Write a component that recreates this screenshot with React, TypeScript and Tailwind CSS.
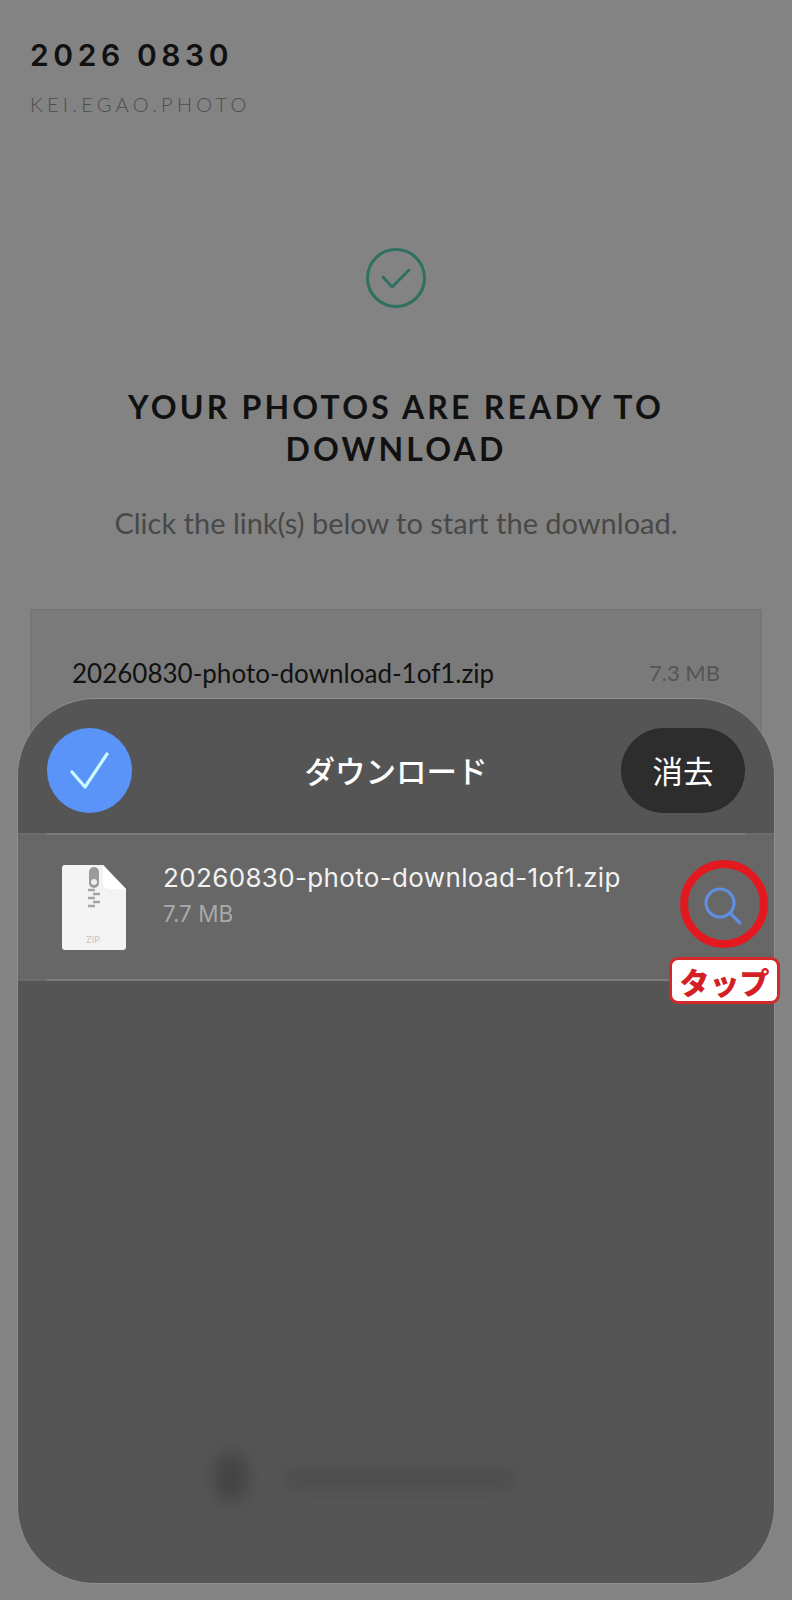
export default function App() {
  const jp = '"Noto Sans CJK JP", sans-serif';
  return (
    <div className="relative w-[792px] h-[1600px] overflow-hidden bg-[#838383] font-['Lato',sans-serif]">
      <div className="flex flex-col px-[30px] pt-[37px]">
        <h1 className="text-[30px] leading-[36px] font-semibold tracking-[4.6px] text-[#111111] font-['Inter',sans-serif]">2026 0830</h1>
        <p className="mt-[19px] text-[20px] leading-[24px] font-light tracking-[4.25px] text-[#4e4e4e]">KEI.EGAO.PHOTO</p>
        <div className="mt-[132px] flex justify-center">
          <svg width="60" height="60" viewBox="0 0 60 60" fill="none" stroke="#2f7160">
            <circle cx="30" cy="30" r="28.5" strokeWidth="3" />
            <path d="M17 29l9 10 17-17" strokeWidth="3" strokeLinecap="round" strokeLinejoin="round" />
          </svg>
        </div>
        <h2 className="mt-[78px] text-center text-[32px] leading-[42px] font-bold tracking-[3.2px] text-[#111111]">
          YOUR PHOTOS ARE READY TO<br />DOWNLOAD
        </h2>
        <p className="mt-[33px] text-center text-[29px] leading-[40px] text-[#484848]">Click the link(s) below to start the download.</p>
        <div className="mt-[66px] h-[200px] border-2 border-[#767676] bg-[#7a7a7a] px-[40px] pt-[45px]">
          <div className="flex items-center justify-between">
            <span className="text-[26px] leading-[34px] text-[#111111]">20260830-photo-download-1of1.zip</span>
            <span className="text-[22px] leading-[34px] text-[#555555]">7.3 MB</span>
          </div>
        </div>
      </div>

      <div className="absolute left-[17px] top-[698px] h-[886px] w-[758px] overflow-hidden rounded-[78px] border border-[#8f8f8f] bg-[#555555]">
        <div className="flex h-[134px] items-center justify-between pt-[8px] pl-[29px] pr-[29px]">
          <div className="w-[124px]">
            <div className="flex h-[85px] w-[85px] items-center justify-center rounded-full bg-[#5b94f8]">
              <svg width="85" height="85" viewBox="0 0 85 85" fill="none" stroke="#c9fbff" strokeWidth="3.2" strokeLinecap="round" strokeLinejoin="round">
                <path d="M25 44l13 15 22-33" />
              </svg>
            </div>
          </div>
          <span className="text-[30.5px] font-medium leading-[40px] text-white" style={{ fontFamily: jp }}>ダウンロード</span>
          <div className="flex h-[85px] w-[124px] items-center justify-center rounded-full bg-[#2d2d2d]">
            <span className="text-[30.5px] leading-[40px] text-white" style={{ fontFamily: jp }}>消去</span>
          </div>
        </div>
        <div className="relative flex h-[148px] items-center border-y-2 border-[#6c6c6c] bg-[#676767] pl-[44px]">
          <div aria-hidden className="absolute left-[29px] right-[29px] top-[-2px] h-[2px] bg-[#7c7c7c]" />
          <div aria-hidden className="absolute left-[29px] right-[29px] bottom-[-2px] h-[2px] bg-[#7c7c7c]" />
          <svg width="64" height="85" viewBox="0 0 64 85">
            <path d="M3 0H41L64 24V82a3 3 0 0 1-3 3H3a3 3 0 0 1-3-3V3a3 3 0 0 1 3-3Z" fill="#f3f3f3" />
            <path d="M41 0L64 24H47a6 6 0 0 1-6-6Z" fill="#ffffff" />
            <rect x="27" y="2" width="10" height="21" rx="5" fill="#9a9a9a" />
            <circle cx="32" cy="17" r="3" fill="#eeeeee" />
            <path d="M26 25h7M31 29h7M26 33h7M31 37h7M26 41h7" stroke="#a5a5a5" strokeWidth="2.6" />
            <text x="31" y="78" textAnchor="middle" fontSize="9" fill="#c4c4c4" fontFamily="Inter, sans-serif">ZIP</text>
          </svg>
          <div className="ml-[37px] mb-[24px] flex flex-col">
            <span className="text-[26px] leading-[34px] tracking-[0.35px] text-[#f2f2f2] font-['Inter',sans-serif]">20260830-photo-download-1of1.zip</span>
            <span className="mt-[4px] text-[22.5px] leading-[30px] text-[#a9a9a9] font-['Inter',sans-serif]">7.7 MB</span>
          </div>
        </div>
        <div aria-hidden className="absolute left-[197px] top-[754px] h-[48px] w-[32px] rounded-full bg-[#434343] blur-[9px]" />
        <div aria-hidden className="absolute left-[266px] top-[771px] h-[18px] w-[232px] rounded-full bg-[#4c4c4c] blur-[8px]" />
      </div>

      <div className="absolute left-[680px] top-[860px] flex h-[88px] w-[88px] items-center justify-center rounded-full border-[8px] border-[#e3191f]">
        <svg width="52" height="52" viewBox="0 0 52 52" fill="none" stroke="#5f8fe0" strokeWidth="3.2" strokeLinecap="round">
          <circle cx="22" cy="25" r="14" />
          <path d="M32 35l10 10" />
        </svg>
      </div>
      <div className="absolute left-[669px] top-[957px] flex h-[47px] w-[111px] items-center justify-center rounded-[9px] border-[3px] border-[#d22a2a] bg-white">
        <span className="text-[30px] font-black leading-[36px] text-[#d41f26]" style={{ fontFamily: jp }}>タップ</span>
      </div>
    </div>
  );
}
